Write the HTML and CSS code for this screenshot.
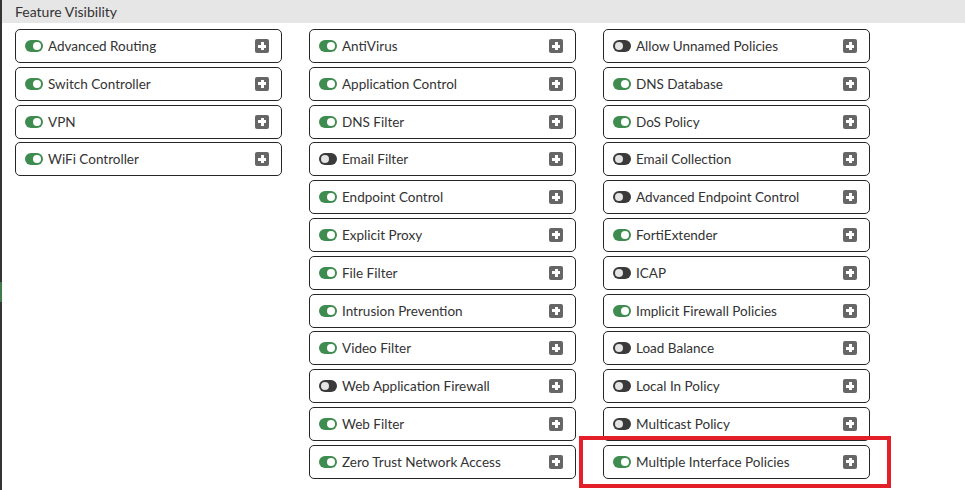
FILE: index.html
```html
<!DOCTYPE html>
<html lang="en">
<head>
    <meta charset="UTF-8">
    <title>Feature Visibility</title>
    <link rel="stylesheet" href="styles.css">
</head>
<body>

<div class="page">
    <div class="section-title">Feature Visibility</div>

    <div class="features">
        <div class="col">
            <div class="feature"><span class="toggle on"></span><span class="name">Advanced Routing</span><span class="plus"></span></div>
            <div class="feature"><span class="toggle on"></span><span class="name">Switch Controller</span><span class="plus"></span></div>
            <div class="feature"><span class="toggle on"></span><span class="name">VPN</span><span class="plus"></span></div>
            <div class="feature"><span class="toggle on"></span><span class="name">WiFi Controller</span><span class="plus"></span></div>
        </div>
        <div class="col">
            <div class="feature"><span class="toggle on"></span><span class="name">AntiVirus</span><span class="plus"></span></div>
            <div class="feature"><span class="toggle on"></span><span class="name">Application Control</span><span class="plus"></span></div>
            <div class="feature"><span class="toggle on"></span><span class="name">DNS Filter</span><span class="plus"></span></div>
            <div class="feature"><span class="toggle"></span><span class="name">Email Filter</span><span class="plus"></span></div>
            <div class="feature"><span class="toggle on"></span><span class="name">Endpoint Control</span><span class="plus"></span></div>
            <div class="feature"><span class="toggle on"></span><span class="name">Explicit Proxy</span><span class="plus"></span></div>
            <div class="feature"><span class="toggle on"></span><span class="name">File Filter</span><span class="plus"></span></div>
            <div class="feature"><span class="toggle on"></span><span class="name">Intrusion Prevention</span><span class="plus"></span></div>
            <div class="feature"><span class="toggle on"></span><span class="name">Video Filter</span><span class="plus"></span></div>
            <div class="feature"><span class="toggle"></span><span class="name">Web Application Firewall</span><span class="plus"></span></div>
            <div class="feature"><span class="toggle on"></span><span class="name">Web Filter</span><span class="plus"></span></div>
            <div class="feature"><span class="toggle on"></span><span class="name">Zero Trust Network Access</span><span class="plus"></span></div>
        </div>
        <div class="col">
            <div class="feature"><span class="toggle"></span><span class="name">Allow Unnamed Policies</span><span class="plus"></span></div>
            <div class="feature"><span class="toggle on"></span><span class="name">DNS Database</span><span class="plus"></span></div>
            <div class="feature"><span class="toggle on"></span><span class="name">DoS Policy</span><span class="plus"></span></div>
            <div class="feature"><span class="toggle"></span><span class="name">Email Collection</span><span class="plus"></span></div>
            <div class="feature"><span class="toggle"></span><span class="name">Advanced Endpoint Control</span><span class="plus"></span></div>
            <div class="feature"><span class="toggle on"></span><span class="name">FortiExtender</span><span class="plus"></span></div>
            <div class="feature"><span class="toggle"></span><span class="name">ICAP</span><span class="plus"></span></div>
            <div class="feature"><span class="toggle on"></span><span class="name">Implicit Firewall Policies</span><span class="plus"></span></div>
            <div class="feature"><span class="toggle"></span><span class="name">Load Balance</span><span class="plus"></span></div>
            <div class="feature"><span class="toggle"></span><span class="name">Local In Policy</span><span class="plus"></span></div>
            <div class="feature"><span class="toggle"></span><span class="name">Multicast Policy</span><span class="plus"></span></div>
            <div class="feature highlighted"><span class="toggle on"></span><span class="name">Multiple Interface Policies</span><span class="plus"></span></div>
        </div>
    </div>
</div>

</body>
</html>
```

FILE: styles.css
```css
body {
    margin: 0;
    font-family: Lato, "Open Sans", sans-serif;
    color: #333;
    background: #fff;
}
.page {
    border-left: 2px solid #343434;
    min-height: 490px;
    box-sizing: border-box;
    position: relative;
}
/* small green marker on the sidebar edge */
.page::before {
    content: "";
    position: absolute;
    left: -2px;
    top: 282px;
    width: 2px;
    height: 20px;
    background: #3d7a4c;
}
.section-title {
    background: #e6e6e6;
    height: 23px;
    line-height: 23px;
    padding-left: 13px;
    font-size: 14px;
    color: #333;
}
.features {
    display: flex;
    gap: 27px;
    padding: 6px 0 0 13px;
}
.col {
    display: flex;
    flex-direction: column;
    gap: 3.8px;
    width: 267px;
}
.feature {
    position: relative;
    display: flex;
    align-items: center;
    height: 34px;
    box-sizing: border-box;
    border: 1px solid #262626;
    border-radius: 5px;
    padding: 0 12px 0 9px;
    font-size: 13.5px;
    color: #333;
}
.name {
    flex: 1;
    margin-left: 5px;
}
.toggle {
    position: relative;
    width: 18px;
    height: 12px;
    border-radius: 6px;
    background: #3a3a3a;
}
.toggle::after {
    content: "";
    position: absolute;
    top: 2px;
    left: 2px;
    width: 8px;
    height: 8px;
    border-radius: 50%;
    background: #e4e4e4;
}
.toggle.on {
    background: #3f8c50;
}
.toggle.on::after {
    left: auto;
    right: 2px;
    background: #fff;
}
.plus {
    position: relative;
    width: 14px;
    height: 14px;
    border-radius: 2px;
    background: #666;
}
.plus::before,
.plus::after {
    content: "";
    position: absolute;
    background: #fff;
}
.plus::before {
    left: 3px;
    top: 5.5px;
    width: 8px;
    height: 3px;
}
.plus::after {
    left: 5.5px;
    top: 3px;
    width: 3px;
    height: 8px;
}
/* red call-out frame around one row */
.highlighted::after {
    content: "";
    position: absolute;
    left: -25px;
    right: -22px;
    top: -10px;
    bottom: -10px;
    border: 4px solid #e3202a;
}
```
